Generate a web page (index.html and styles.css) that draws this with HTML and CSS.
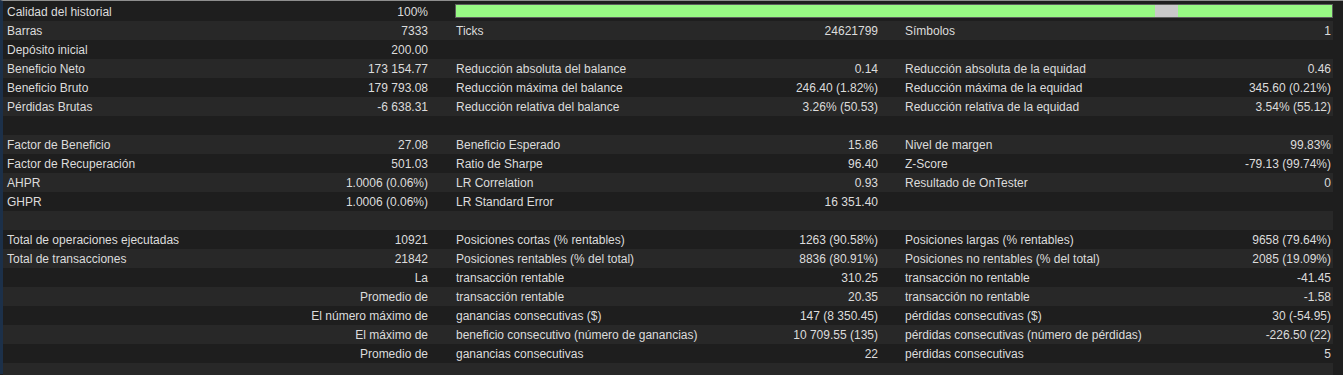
FILE: index.html
```html
<!DOCTYPE html>
<html lang="es">
<head>
<meta charset="utf-8">
<title>Informe</title>
<link rel="stylesheet" href="styles.css">
</head>
<body>
<div class="frame">
  <div class="report">
    <div class="row">
      <div class="g"><span>Calidad del historial</span><span>100%</span></div>
      <div class="bar"><div class="seg ok a"></div><div class="seg gap"></div><div class="seg ok b"></div></div>
    </div>
    <div class="row">
      <div class="g"><span>Barras</span><span>7333</span></div>
      <div class="g"><span>Ticks</span><span>24621799</span></div>
      <div class="g"><span>Símbolos</span><span>1</span></div>
    </div>
    <div class="row">
      <div class="g"><span>Depósito inicial</span><span>200.00</span></div>
      <div class="g"></div>
      <div class="g"></div>
    </div>
    <div class="row">
      <div class="g"><span>Beneficio Neto</span><span>173 154.77</span></div>
      <div class="g"><span>Reducción absoluta del balance</span><span>0.14</span></div>
      <div class="g"><span>Reducción absoluta de la equidad</span><span>0.46</span></div>
    </div>
    <div class="row">
      <div class="g"><span>Beneficio Bruto</span><span>179 793.08</span></div>
      <div class="g"><span>Reducción máxima del balance</span><span>246.40 (1.82%)</span></div>
      <div class="g"><span>Reducción máxima de la equidad</span><span>345.60 (0.21%)</span></div>
    </div>
    <div class="row">
      <div class="g"><span>Pérdidas Brutas</span><span>-6 638.31</span></div>
      <div class="g"><span>Reducción relativa del balance</span><span>3.26% (50.53)</span></div>
      <div class="g"><span>Reducción relativa de la equidad</span><span>3.54% (55.12)</span></div>
    </div>
    <div class="row"></div>
    <div class="row">
      <div class="g"><span>Factor de Beneficio</span><span>27.08</span></div>
      <div class="g"><span>Beneficio Esperado</span><span>15.86</span></div>
      <div class="g"><span>Nivel de margen</span><span>99.83%</span></div>
    </div>
    <div class="row">
      <div class="g"><span>Factor de Recuperación</span><span>501.03</span></div>
      <div class="g"><span>Ratio de Sharpe</span><span>96.40</span></div>
      <div class="g"><span>Z-Score</span><span>-79.13 (99.74%)</span></div>
    </div>
    <div class="row">
      <div class="g"><span>AHPR</span><span>1.0006 (0.06%)</span></div>
      <div class="g"><span>LR Correlation</span><span>0.93</span></div>
      <div class="g"><span>Resultado de OnTester</span><span>0</span></div>
    </div>
    <div class="row">
      <div class="g"><span>GHPR</span><span>1.0006 (0.06%)</span></div>
      <div class="g"><span>LR Standard Error</span><span>16 351.40</span></div>
      <div class="g"></div>
    </div>
    <div class="row"></div>
    <div class="row">
      <div class="g"><span>Total de operaciones ejecutadas</span><span>10921</span></div>
      <div class="g"><span>Posiciones cortas (% rentables)</span><span>1263 (90.58%)</span></div>
      <div class="g"><span>Posiciones largas (% rentables)</span><span>9658 (79.64%)</span></div>
    </div>
    <div class="row">
      <div class="g"><span>Total de transacciones</span><span>21842</span></div>
      <div class="g"><span>Posiciones rentables (% del total)</span><span>8836 (80.91%)</span></div>
      <div class="g"><span>Posiciones no rentables (% del total)</span><span>2085 (19.09%)</span></div>
    </div>
    <div class="row">
      <div class="g"><span></span><span>La</span></div>
      <div class="g"><span>transacción rentable</span><span>310.25</span></div>
      <div class="g"><span>transacción no rentable</span><span>-41.45</span></div>
    </div>
    <div class="row">
      <div class="g"><span></span><span>Promedio de</span></div>
      <div class="g"><span>transacción rentable</span><span>20.35</span></div>
      <div class="g"><span>transacción no rentable</span><span>-1.58</span></div>
    </div>
    <div class="row">
      <div class="g"><span></span><span>El número máximo de</span></div>
      <div class="g"><span>ganancias consecutivas ($)</span><span>147 (8 350.45)</span></div>
      <div class="g"><span>pérdidas consecutivas ($)</span><span>30 (-54.95)</span></div>
    </div>
    <div class="row">
      <div class="g"><span></span><span>El máximo de</span></div>
      <div class="g"><span>beneficio consecutivo (número de ganancias)</span><span>10 709.55 (135)</span></div>
      <div class="g"><span>pérdidas consecutivas (número de pérdidas)</span><span>-226.50 (22)</span></div>
    </div>
    <div class="row">
      <div class="g"><span></span><span>Promedio de</span></div>
      <div class="g"><span>ganancias consecutivas</span><span>22</span></div>
      <div class="g"><span>pérdidas consecutivas</span><span>5</span></div>
    </div>
  </div>
</div>
</body>
</html>
```
FILE: styles.css
```css
html, body {
  margin: 0;
  padding: 0;
  background: #1e1e1e;
}
body {
  width: 1343px;
  height: 375px;
  overflow: hidden;
  font-family: "Liberation Sans", Arial, sans-serif;
  font-size: 12px;
  color: #dcdcdc;
}
.frame {
  border-top: 1px solid #8e8e8e;
  border-left: 3px solid #1c3049;
  height: 374px;
  box-sizing: border-box;
  background: #1e1e1e;
}
.report {
  margin-top: 1px;
  width: 1330px;
  height: 373px;
  background: #282828;
}
.row {
  display: grid;
  grid-template-columns: 422px 422px 426px;
  column-gap: 27px;
  padding: 1px 2px 0 4px;
  height: 19px;
  box-sizing: border-box;
  line-height: 19px;
}
.row:nth-child(odd) {
  background: #1e1e1e;
}
.row:nth-child(even) {
  background: #282828;
}
.g {
  display: flex;
  justify-content: space-between;
  white-space: nowrap;
  height: 18px;
  box-sizing: border-box;
}
.g:first-child {
  padding-right: 1px;
}
.bar {
  grid-column: 2 / 4;
  margin: 1px -2px 0 -1px;
  height: 14px;
  box-sizing: border-box;
  border: 1px solid #5e5e5e;
  display: flex;
  align-self: start;
}
.seg { height: 100%; }
.ok { background: #98f984; }
.a { flex: 0 0 699px; }
.gap { flex: 0 0 23px; background: #c9c9c9; }
.b { flex: 1 1 auto; }
```
